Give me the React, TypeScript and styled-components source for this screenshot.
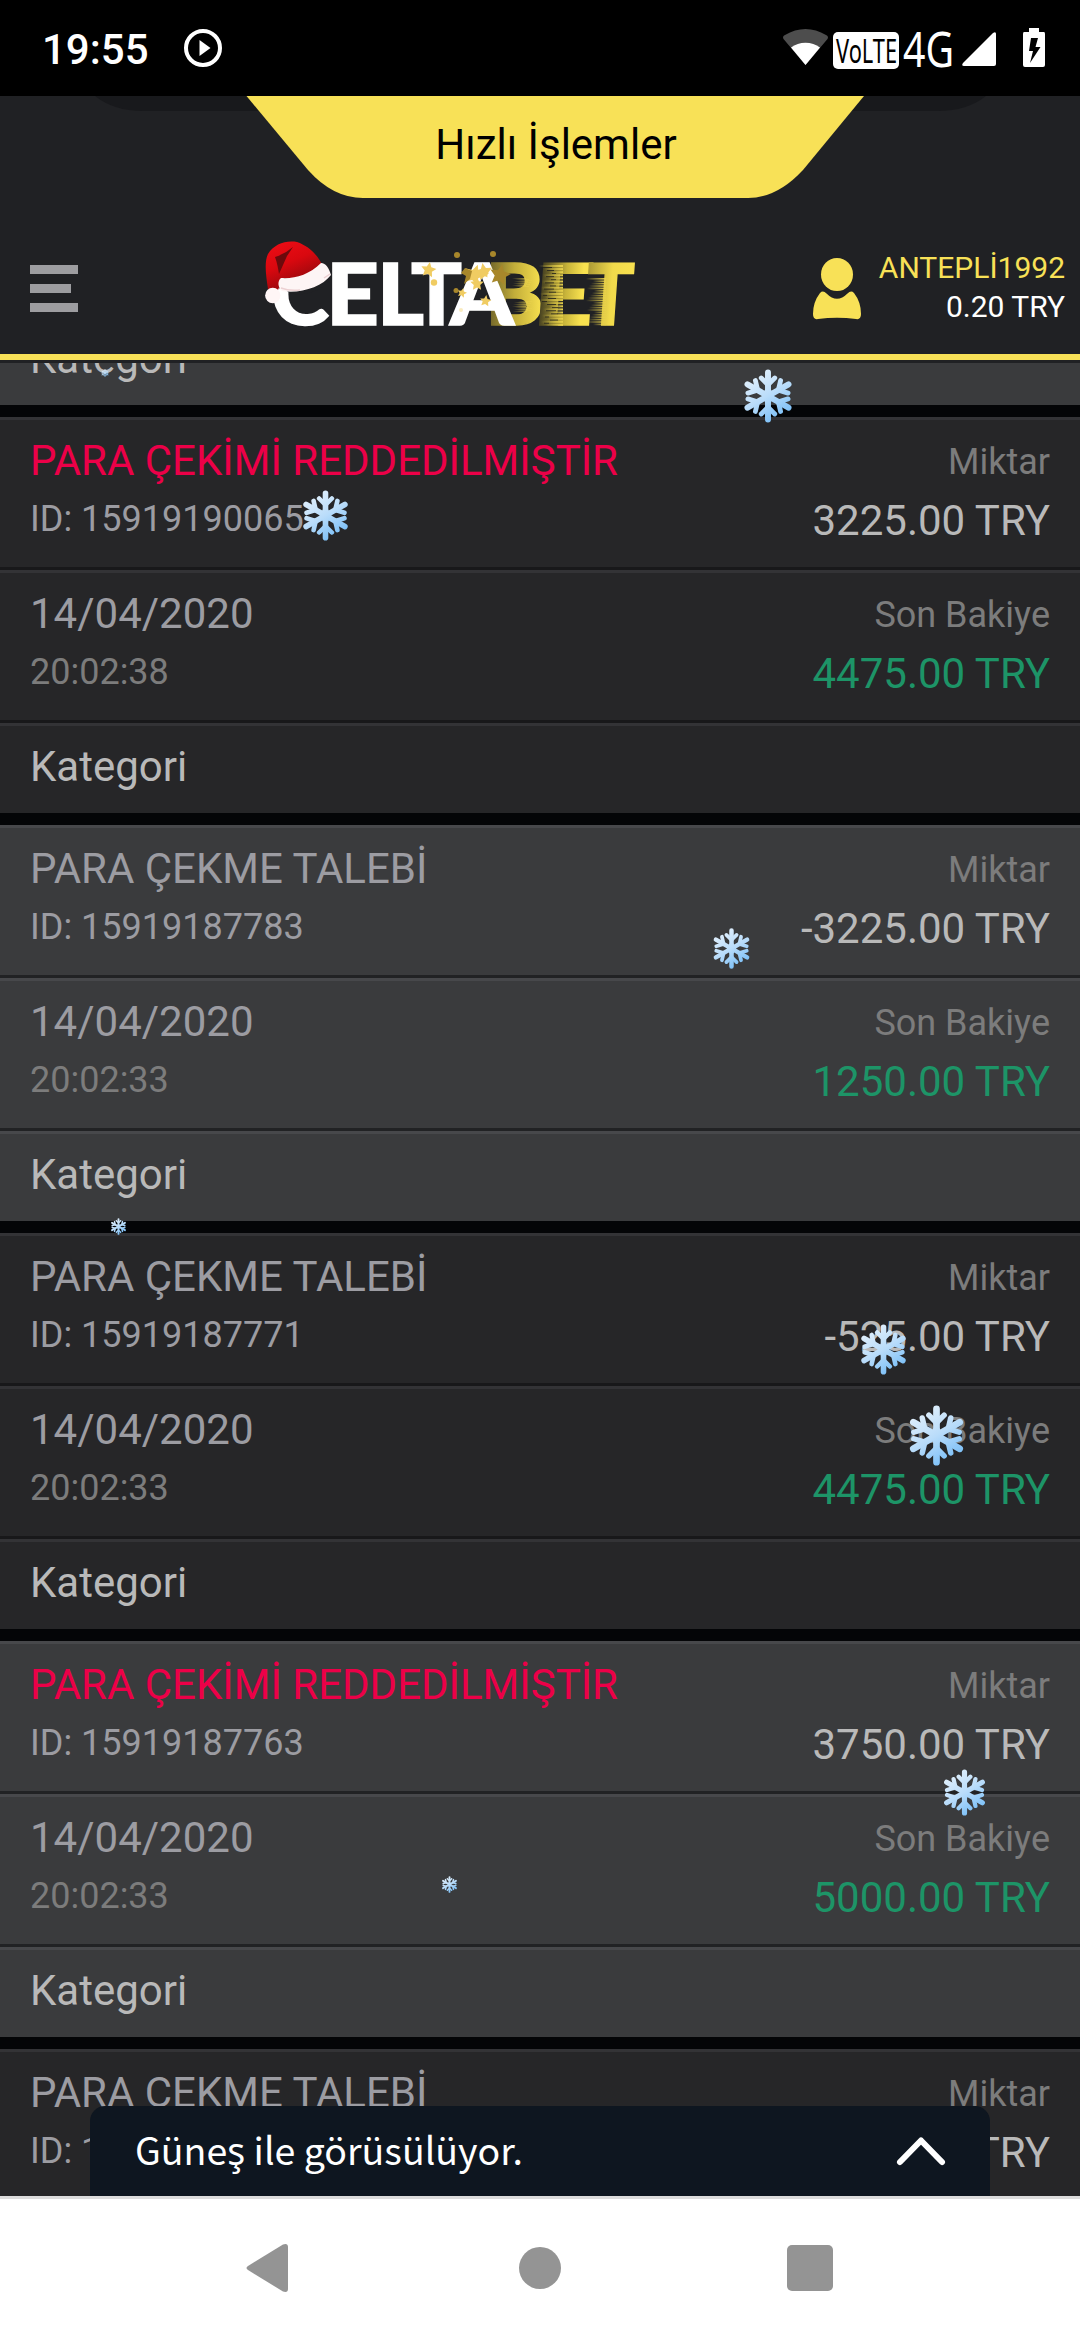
import React from "react";
import styled, { createGlobalStyle } from "styled-components";

const GlobalStyle = createGlobalStyle`
  * { box-sizing: border-box; }
  html, body { margin: 0; padding: 0; background: #202124; }
  body { font-family: Roboto, "Liberation Sans", sans-serif; overflow: hidden; }
`;

const Screen = styled.div`
  position: relative;
  width: 1080px;
  height: 2340px;
  display: flex;
  flex-direction: column;
  overflow: hidden;
  background: #202124;
`;

const StatusBar = styled.div`
  flex: none;
  height: 96px;
  background: #000;
  display: flex;
  align-items: center;
  justify-content: space-between;
  padding-left: 42px;
  z-index: 3;
`;

const StatusLeft = styled.div`
  display: flex;
  align-items: center;
  gap: 32px;
  color: #fff;
`;

const Clock = styled.span`
  font-size: 42px;
  line-height: 50px;
  font-weight: 500;
  width: 110px;
  padding-top: 4px;
`;

const Icon = styled.svg`
  display: block;
  flex: none;
  overflow: visible;
`;

const Header = styled.header`
  position: relative;
  flex: none;
  height: 267px;
  background: #202124;
  display: flex;
  flex-direction: column;
  z-index: 2;
`;

const QuickTab = styled.div`
  position: relative;
  height: 102px;
  display: flex;
  justify-content: center;
  padding-left: 32px;
`;

const TabShape = styled.svg`
  position: absolute;
  left: 0;
  top: 0;
`;

const TabLabel = styled.span`
  position: relative;
  font-size: 42px;
  line-height: 50px;
  margin-top: 24px;
  color: #000;
`;

const Toolbar = styled.div`
  flex: 1;
  display: flex;
  align-items: center;
  padding: 25px 15px 0 30px;
  border-bottom: 6px solid #f8e157;
  margin-bottom: 3px;
`;

const Account = styled.div`
  display: flex;
  align-items: center;
  gap: 18px;
  margin-left: auto;
`;

const AccountText = styled.div`
  display: flex;
  flex-direction: column;
  align-items: flex-end;
  font-size: 30px;
  line-height: 39px;
  margin-bottom: 3px;
`;

const UserName = styled.span`
  color: #f8e157;
`;

const Balance = styled.span`
  color: #fff;
`;

const MenuButton = styled.button`
  border: 0;
  background: none;
  padding: 0;
  width: 48px;
  display: flex;
  flex-direction: column;
  gap: 10px;
`;

const MenuBar = styled.span<{ $short?: boolean }>`
  width: ${(p) => (p.$short ? 40.5 : 48)}px;
  height: 9px;
  background: #9d9da0;
`;

const LogoBox = styled.svg`
  display: block;
  flex: none;
  overflow: visible;
  margin: 0 0 9px 182px;
`;

const List = styled.main`
  flex: 1;
  min-height: 0;
  overflow: hidden;
  background: #040507;
  display: flex;
  flex-direction: column;
  justify-content: flex-end;
`;

const Feed = styled.div`
  display: flex;
  flex-direction: column;
  gap: 12px;
  margin-bottom: -249px;
`;

const Card = styled.section<{ $alt: boolean }>`
  flex: none;
  display: flex;
  flex-direction: column;
  background: ${(p) => (p.$alt ? "#3a3b3d" : "#262628")};
  --edge: ${(p) => (p.$alt ? "#47484b" : "#333336")};
  --shade: ${(p) => (p.$alt ? "#212224" : "#18181a")};
`;

const Row = styled.div<{ $last?: boolean }>`
  display: flex;
  justify-content: space-between;
  height: ${(p) => (p.$last ? 90 : 153)}px;
  padding: 13px 30px 0;
  border-top: 3px solid var(--edge);
  border-bottom: ${(p) => (p.$last ? "0" : "3px solid var(--shade)")};
`;

const Left = styled.div`
  display: flex;
  flex-direction: column;
`;

const Right = styled.div`
  display: flex;
  flex-direction: column;
  align-items: flex-end;
`;

const Title = styled.span<{ $color: string }>`
  font-size: 42px;
  line-height: 56px;
  color: ${(p) => p.$color};
`;

const Sub = styled.span<{ $color: string }>`
  font-size: 36px;
  line-height: 60px;
  color: ${(p) => p.$color};
`;

const Caption = styled.span`
  font-size: 36px;
  line-height: 59px;
  color: #7c7c7c;
`;

const Amount = styled.span<{ $color: string }>`
  font-size: 42px;
  line-height: 57px;
  color: ${(p) => p.$color};
`;

const ChatBar = styled.div`
  position: absolute;
  left: 90px;
  top: 2106px;
  width: 900px;
  height: 90px;
  border-radius: 15px 15px 0 0;
  background: #0e1620;
  display: flex;
  align-items: center;
  justify-content: space-between;
  padding: 0 45px;
  z-index: 3;
`;

const ChatText = styled.span`
  font-family: "Noto Sans CJK JP", "Noto Sans", sans-serif;
  font-size: 37.5px;
  line-height: 60px;
  padding-bottom: 5px;
  color: #fff;
`;

const NavBar = styled.nav`
  flex: none;
  height: 144px;
  border-top: 3px solid #dcdcdc;
  background: #fff;
  display: flex;
  align-items: center;
  gap: 226px;
  padding: 0 246px 3px;
  z-index: 3;
`;

const FlakeBox = styled.svg`
  position: absolute;
  z-index: 1;
`;

type Entry = {
  rejected?: boolean;
  id: string;
  amount: string;
  time: string;
  balance: string;
};

const entries: Entry[] = [
  { id: "15919190073", amount: "-3225.00 TRY", time: "20:02:38", balance: "1250.00 TRY" },
  { rejected: true, id: "15919190065", amount: "3225.00 TRY", time: "20:02:38", balance: "4475.00 TRY" },
  { id: "15919187783", amount: "-3225.00 TRY", time: "20:02:33", balance: "1250.00 TRY" },
  { id: "15919187771", amount: "-525.00 TRY", time: "20:02:33", balance: "4475.00 TRY" },
  { rejected: true, id: "15919187763", amount: "3750.00 TRY", time: "20:02:33", balance: "5000.00 TRY" },
  { id: "15919187751", amount: "-3750.00 TRY", time: "20:02:33", balance: "1250.00 TRY" },
];

const flakes = [
  { x: 104.5, y: 372.5, h: 8 },
  { x: 768.3, y: 395.7, h: 54 },
  { x: 325.3, y: 515, h: 51 },
  { x: 731.5, y: 948, h: 41 },
  { x: 118.5, y: 1226.5, h: 17 },
  { x: 883.7, y: 1349.7, h: 51 },
  { x: 936, y: 1435.7, h: 61 },
  { x: 964.7, y: 1792, h: 47 },
  { x: 449, y: 1884, h: 17 },
];

function Flake({ x, y, h, n }: { x: number; y: number; h: number; n: number }) {
  return (
    <FlakeBox width={h} height={h} viewBox="-30 -30 60 60" style={{ left: x - h / 2, top: y - h / 2 }}>
      <defs>
        <linearGradient id={`ice${n}`} gradientUnits="userSpaceOnUse" x1="-16" y1="-26" x2="16" y2="26">
          <stop offset="0" stopColor="#e2f0fc" />
          <stop offset="0.5" stopColor="#b9dcfa" />
          <stop offset="1" stopColor="#76bdf7" />
        </linearGradient>
      </defs>
      <g fill="none" stroke={`url(#ice${n})`} strokeWidth="6.6" strokeLinecap="round">
        <path d="M0 -26.2V26.2M-22.800 -13L22.800 13M-22.800 13L22.800 -13" />
        <path
          strokeWidth="5.400"
          d="M-7.500 -20L0 -12.500L7.500 -20M-7.500 20L0 12.500L7.500 20M-22.300 -3.200L-11.500 -6.600L-14 -17.200M22.300 -3.200L11.500 -6.600L14 -17.200M-22.300 3.200L-11.500 6.600L-14 17.200M22.300 3.200L11.500 6.600L14 17.200"
        />
      </g>
      <ellipse rx="5" ry="9" fill={`url(#ice${n})`} />
    </FlakeBox>
  );
}

const star = (cx: number, cy: number, r: number, turn = 0) =>
  Array.from({ length: 10 }, (_, i) => {
    const a = ((i * 36 + turn - 90) * Math.PI) / 180;
    const q = i % 2 ? r * 0.48 : r;
    return `${(cx + q * Math.cos(a)).toFixed(1)},${(cy + q * Math.sin(a)).toFixed(1)}`;
  }).join(" ");

const streakRows = Array.from({ length: 20 }, (_, i) => i);

function Logo() {
  return (
    <LogoBox width="380" height="92" viewBox="260 238 380 92">
      <defs>
        <linearGradient id="hat" x1="0" y1="0" x2="0.5" y2="1">
          <stop offset="0" stopColor="#f10d16" />
          <stop offset="0.5" stopColor="#d9080f" />
          <stop offset="1" stopColor="#8b090d" />
        </linearGradient>
        <linearGradient id="goldB" gradientUnits="userSpaceOnUse" x1="487" y1="0" x2="542" y2="0">
          <stop offset="0" stopColor="#6a5f28" />
          <stop offset="0.5" stopColor="#c3ae3a" />
          <stop offset="1" stopColor="#f8e14f" />
        </linearGradient>
        <linearGradient id="goldE" gradientUnits="userSpaceOnUse" x1="538" y1="0" x2="593" y2="0">
          <stop offset="0" stopColor="#39351e" />
          <stop offset="0.5" stopColor="#c8b43a" />
          <stop offset="0.8" stopColor="#f8e14f" />
        </linearGradient>
        <linearGradient id="goldT" gradientUnits="userSpaceOnUse" x1="588" y1="0" x2="634" y2="0">
          <stop offset="0" stopColor="#b19f37" />
          <stop offset="0.5" stopColor="#f1da4b" />
          <stop offset="1" stopColor="#f8e14f" />
        </linearGradient>
        <linearGradient id="streak" x1="0" y1="0" x2="1" y2="0">
          <stop offset="0" stopColor="#e8d14a" stopOpacity="0" />
          <stop offset="1" stopColor="#e8d14a" />
        </linearGradient>
      </defs>
      <g fontFamily="Lato" fontWeight="900" fontSize="85" strokeWidth="1.500">
        <text x="485" y="325" textLength="59" lengthAdjust="spacingAndGlyphs" fill="url(#goldB)" stroke="url(#goldB)">B</text>
        <text x="534" y="325" textLength="60" lengthAdjust="spacingAndGlyphs" fill="url(#goldE)" stroke="url(#goldE)" transform="skewX(-4)" style={{ transformOrigin: "560px 295px", transformBox: "view-box" }}>E</text>
        <text x="586" y="325" textLength="47" lengthAdjust="spacingAndGlyphs" fill="url(#goldT)" stroke="url(#goldT)" transform="skewX(-4)" style={{ transformOrigin: "610px 295px", transformBox: "view-box" }}>T</text>
        <g strokeWidth="0">
          {streakRows.map((i) => (
            <g key={i}>
              <rect x={586 + ((i * 7) % 9)} y={278 + i * 2.4} width={20 - ((i * 7) % 9)} height="1.6" fill="url(#streak)" />
              <rect x={539 + ((i * 5) % 11)} y={265 + i * 3.1} width={24 - ((i * 5) % 11)} height="2" fill="url(#streak)" />
              <rect x={542 + ((i * 5) % 11)} y={267 + i * 3.1} width={10 - ((i * 3) % 7)} height="0.8" fill="#24231c" />
              <rect x={512 + ((i * 3) % 7)} y={i < 9 ? 278 + i : 292 + i} width="14" height="0.7" fill="url(#streak)" />
            </g>
          ))}
        </g>
        <g fill="#fff" stroke="#fff">
          <text x="271" y="325" textLength="58" lengthAdjust="spacingAndGlyphs">C</text>
          <text x="326" y="325" textLength="53" lengthAdjust="spacingAndGlyphs">E</text>
          <text x="377" y="325" textLength="47" lengthAdjust="spacingAndGlyphs">L</text>
          <text x="411" y="325" textLength="51" lengthAdjust="spacingAndGlyphs">T</text>
          <text x="450" y="325" textLength="64" lengthAdjust="spacingAndGlyphs">A</text>
        </g>
      </g>
      <g fill="#f0cc62">
        <polygon points={star(428.5, 270, 8, 10)} />
        <circle cx="434" cy="282.5" r="3.2" />
        <polygon points={star(474, 275, 11, 20)} />
        <polygon points={star(484, 272, 9, -10)} />
        <polygon points={star(477, 284, 7)} />
        <polygon points={star(462, 293, 5, 15)} />
        <polygon points={star(485.5, 301, 6, 8)} />
        <circle cx="461" cy="310" r="2" opacity="0.4" />
      </g>
      <g fill="#a8872b">
        <circle cx="457" cy="255" r="3" />
        <circle cx="493" cy="254" r="3" />
        <circle cx="456" cy="290.500" r="2.5" />
        <polygon points="465,268 472,271 470,279 464,284 466,276 461,273" />
        <polygon points={star(500, 275, 11, 12)} />
      </g>
      <circle cx="490" cy="276" r="2.700" fill="#fff" />
      <path d="M279 289L280 277C283 264 325 252 330 270L328 282C321 290 312 293 303 294C294 295 288 293 286 290Z" fill="#202124" />
      <path d="M275.500 288C274.500 292 275 297 277 302L290 306C287.500 301 286.500 295 287.500 289Z" fill="#fff" />
      <path d="M268 289C266 276 264 262 268 254C274 244 286 240 297 242C309 246 319 256 323 267C313 277 299 280 283 278L278 290C274 288 271 289 268 289Z" fill="url(#hat)" />
      <path d="M293 247L287 256L279 274C278 268 277 262 275 257Q285 254 293 247Z" fill="#6b0a0c" />
      <path d="M281 278C294 279 309 275 321 263C326 263 329 268 331 275C322 287 300 294 282 291C278 288 277 281 281 278Z" fill="#fdf5f5" />
      <path d="M281 288Q289 291 300 290M324 278L330 274" stroke="#ecd0d2" strokeWidth="1.500" fill="none" />
      <circle cx="272.800" cy="295.500" r="7.700" fill="#fff6f6" />
    </LogoBox>
  );
}

export default function App() {
  return (
    <Screen>
      <GlobalStyle />
      <StatusBar>
        <StatusLeft>
          <Clock>19:55</Clock>
          <Icon width="38" height="38" viewBox="0 0 38 38">
            <circle cx="19" cy="19" r="17" fill="none" stroke="#fff" strokeWidth="4" />
            <path d="M15.500 11L26.500 19L15.500 27Z" fill="#fff" />
          </Icon>
        </StatusLeft>
        <Icon width="300" height="96" viewBox="780 0 300 96">
          <path d="M805.500 65L783.500 39C782.500 37 783 36 785 35C798 27 813 27 826 35C828 36 828.500 37 827.500 39Z" fill="#4d4d4d" />
          <path d="M805.500 65L791 47.500C799 41 812 41 820 47.500Z" fill="#fff" />
          <rect x="833" y="32" width="66" height="37" rx="5" fill="#fff" />
          <text x="836" y="63" fontFamily="Noto Sans" fontSize="32" textLength="61" lengthAdjust="spacingAndGlyphs" fill="#000">VoLTE</text>
          <text x="903" y="66.500" fontFamily="Noto Sans" fontSize="49" textLength="51" lengthAdjust="spacingAndGlyphs" fill="#fff">4G</text>
          <path d="M963 63L993 33Q996 31 996 34V64Q996 66 994 66H964Q961 66 963 63Z" fill="#fff" />
          <path d="M1024 32H1029V28H1039V32H1044Q1045 32 1045 34V65Q1045 67 1043 67H1025Q1023 67 1023 65V34Q1023 32 1024 32Z" fill="#fff" />
          <path d="M1031 38H1038L1035.500 47H1040.500L1030 63L1033 51H1029Z" fill="#000" />
        </Icon>
      </StatusBar>

      <Header>
        <QuickTab>
          <TabShape width="1080" height="102" viewBox="0 0 1080 102">
            <path d="M95 0Q114 15 143 15H938Q967 15 986 0Z" fill="#18191c" />
            <path d="M246.500 0L308 74Q333 102 363 102H748Q777 102 803 74L864 0Z" fill="#f8e157" />
          </TabShape>
          <TabLabel>Hızlı İşlemler</TabLabel>
        </QuickTab>
        <Toolbar>
          <MenuButton>
            <MenuBar />
            <MenuBar $short />
            <MenuBar />
          </MenuButton>
          <Logo />
          <Account>
            <Icon width="48" height="62" viewBox="0 0 48 62">
              <ellipse cx="24" cy="16.500" rx="16" ry="16.500" fill="#f8e157" />
              <path d="M7 35Q10 32 13.500 35.500Q24 46 34.500 35.500Q38 32 41 35Q48 44 48 56Q48 62 43 61Q24 58.500 5 61Q0 62 0 56Q0 44 7 35Z" fill="#f8e157" />
            </Icon>
            <AccountText>
              <UserName>ANTEPLİ1992</UserName>
              <Balance>0.20 TRY</Balance>
            </AccountText>
          </Account>
        </Toolbar>
      </Header>

      <List>
        <Feed>
          {entries.map((e, i) => (
            <Card key={e.id} $alt={i % 2 === 0}>
              <Row>
                <Left>
                  <Title $color={e.rejected ? "#ec0048" : "#9c9ca2"}>
                    {e.rejected ? "PARA ÇEKİMİ REDDEDİLMİŞTİR" : "PARA ÇEKME TALEBİ"}
                  </Title>
                  <Sub $color="#9c9ca2">ID: {e.id}</Sub>
                </Left>
                <Right>
                  <Caption>Miktar</Caption>
                  <Amount $color="#b9b9b9">{e.amount}</Amount>
                </Right>
              </Row>
              <Row>
                <Left>
                  <Title $color="#9c9ca2">14/04/2020</Title>
                  <Sub $color="#7c7c7c">{e.time}</Sub>
                </Left>
                <Right>
                  <Caption>Son Bakiye</Caption>
                  <Amount $color="#1d9467">{e.balance}</Amount>
                </Right>
              </Row>
              <Row $last>
                <Title $color="#b9b9b9">Kategori</Title>
              </Row>
            </Card>
          ))}
        </Feed>
      </List>

      {flakes.map((f, i) => (
        <Flake key={i} n={i} {...f} />
      ))}

      <ChatBar>
        <ChatText>Güneş ile görüsülüyor.</ChatText>
        <Icon width="48" height="28" viewBox="0 0 48 28">
          <path d="M3 25L24 3.500L45 25" fill="none" stroke="#fff" strokeWidth="6" strokeLinecap="round" strokeLinejoin="round" />
        </Icon>
      </ChatBar>

      <NavBar>
        <Icon width="47" height="50" viewBox="0 0 47 50">
          <path d="M2 23L37 1.500Q42 0 42 4V46Q42 50 37 48.500L2 27Q-1 25 2 23Z" fill="#949494" />
        </Icon>
        <Icon width="42" height="42" viewBox="0 0 42 42">
          <circle cx="21" cy="21" r="21" fill="#949494" />
        </Icon>
        <Icon width="46" height="46" viewBox="0 0 46 46">
          <rect width="46" height="46" rx="5" fill="#949494" />
        </Icon>
      </NavBar>
    </Screen>
  );
}
